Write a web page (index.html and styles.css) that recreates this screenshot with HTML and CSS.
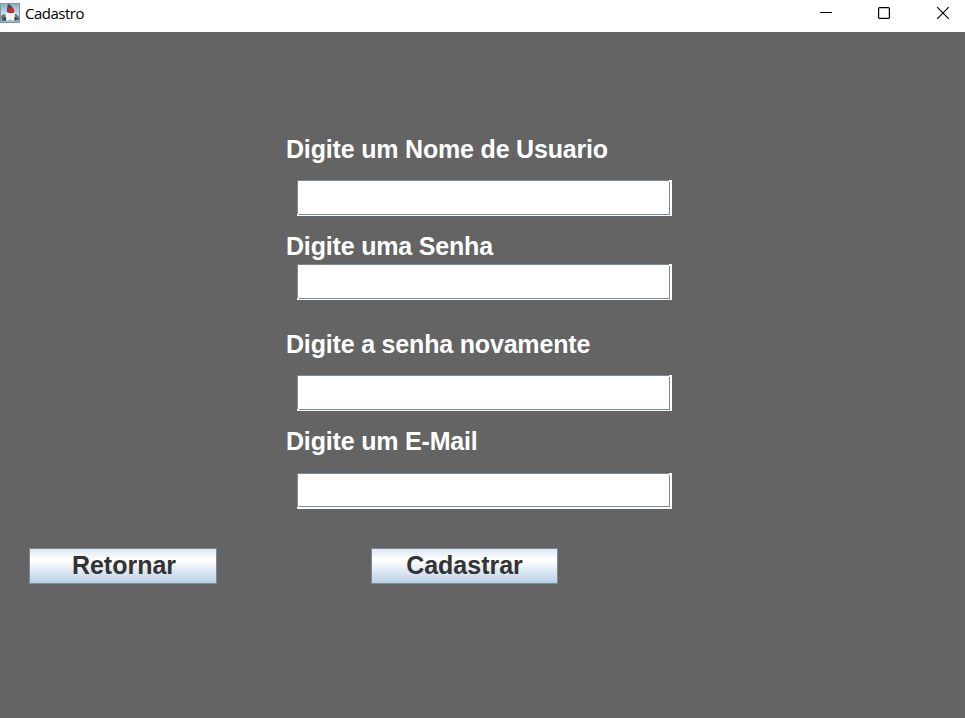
FILE: index.html
```html
<!DOCTYPE html>
<html lang="pt-BR">
<head>
<meta charset="utf-8">
<title>Cadastro</title>
<link rel="stylesheet" href="styles.css">
</head>
<body>
<header class="titlebar">
  <svg class="app-icon" viewBox="0 0 20 20" aria-hidden="true">
    <defs><linearGradient id="sky" x1="0" y1="0" x2="0" y2="1"><stop offset="0" stop-color="#8fabc0"/><stop offset=".55" stop-color="#cfdde6"/><stop offset="1" stop-color="#9db2bf"/></linearGradient></defs>
    <rect width="20" height="20" fill="#8097a8"/>
    <rect x="1" y="1" width="18" height="18" fill="url(#sky)"/>
    <path d="M1 13 4 11 7 13 7 18 2 18ZM13 12 16 11 19 14 19 17 14 18Z" fill="#65717a"/>
    <path d="M7 9 C10 8 13 8 14 10 C16 14 15 17 13 18 C11 16 9 16 7 18 C5 16 5 12 7 9Z" fill="#f2f4f5"/>
    <path d="M8 1 C11 2 14 5 14.5 9 C13 10.5 9 10.5 7 9 C7 6 7.3 3 8 1Z" fill="#454b50"/>
    <path d="M2 16 6 14 6 17ZM14 14 18 16 15 17Z" fill="#30373b"/>
    <ellipse cx="10.8" cy="7.3" rx="2.7" ry="2.5" fill="#e02222"/>
  </svg>
  <span class="title">Cadastro</span>
  <div class="controls">
    <svg viewBox="0 0 14 14" aria-label="Minimizar"><path d="M2 6.5H14" stroke="#000"/></svg>
    <svg viewBox="0 0 14 14" aria-label="Maximizar"><rect x="1.6" y="1.6" width="10.8" height="10.8" rx="1" fill="none" stroke="#000" stroke-width="1.2"/></svg>
    <svg viewBox="0 0 14 14" aria-label="Fechar"><path d="M1.2 1.2 12.8 12.8M12.8 1.2 1.2 12.8" stroke="#000" stroke-width="1.15"/></svg>
  </div>
</header>
<main>
  <form class="form">
    <label for="user">Digite um Nome de Usuario</label>
    <div class="field"><input id="user" type="text"></div>
    <label for="pass">Digite uma Senha</label>
    <div class="field"><input id="pass" type="password"></div>
    <label for="again">Digite a senha novamente</label>
    <div class="field"><input id="again" type="password"></div>
    <label for="mail">Digite um E-Mail</label>
    <div class="field last"><input id="mail" type="text"></div>
  </form>
  <div class="actions">
    <button class="back" type="button">Retornar</button>
    <button class="submit" type="button">Cadastrar</button>
  </div>
</main>
</body>
</html>
```
FILE: styles.css
```css
* { box-sizing: border-box; }
body {
  margin: 0;
  height: 718px;
  overflow: hidden;
  background: #646464;
  font-family: "Liberation Sans", Arial, sans-serif;
}
.titlebar {
  display: flex;
  height: 32px;
  background: #fff;
}
.app-icon { width: 20px; height: 20px; margin-top: 3px; }
.title {
  margin-left: 5px;
  font: 15px/26px "Open Sans", sans-serif;
  letter-spacing: -0.5px;
  color: #000;
}
.controls {
  display: flex;
  gap: 45px;
  margin: 6px 15px 0 auto;
}
.controls svg { width: 14px; height: 14px; }
.form {
  display: grid;
  grid-template-rows: 48px 36px 48px 36px 75px 36px 62px 36px;
  margin: 100px 0 0 286px;
  width: 386px;
}
label {
  padding-top: 3px;
  font-weight: bold;
  font-size: 25px;
  line-height: 28px;
  letter-spacing: -0.18px;
  color: #fff;
  white-space: nowrap;
}
label[for="pass"] { padding-top: 16px; }
label[for="again"] { padding-top: 30px; }
label[for="mail"] { padding-top: 16px; }
/* Etched frame: dark top and left lines stop short of the white highlight */
.field {
  margin-left: 11px;
  height: 36px;
  padding: 2px 2px 1px 2px;
  background:
    linear-gradient(#7a8a99, #7a8a99) 0 0 / 372px 1px no-repeat,
    linear-gradient(#7a8a99, #7a8a99) 0 0 / 1px 34px no-repeat,
    #fff;
}
.field input {
  display: block;
  width: 100%;
  height: 100%;
  padding: 0 4px;
  border: solid #7a8a99;
  border-width: 0 1px 1px 0;
  background: #fff;
  font: 25px "Liberation Sans", sans-serif;
  outline: none;
}
.last { padding-bottom: 2px; }
.actions {
  display: flex;
  gap: 154px;
  margin: 39px 0 0 29px;
}
button {
  height: 36px;
  padding: 0 0 1px;
  border: 1px solid #7a8a99;
  background: linear-gradient(#dde8f3 0%, #fff 30%, #fff 34%, #b8cfe5 100%);
  font: bold 25px "Liberation Sans", Arial, sans-serif;
  color: #333;
}
.back { width: 188px; padding-left: 2px; }
.submit { width: 187px; }
```
